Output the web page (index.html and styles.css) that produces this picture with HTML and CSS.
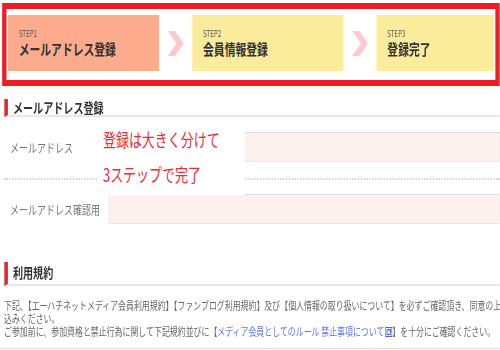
FILE: index.html
```html
<!DOCTYPE html>
<html lang="ja">
<head>
  <meta charset="UTF-8" />
  <title>会員登録 – メールアドレス登録</title>
  <link rel="stylesheet" href="styles.css">
</head>
<body>

<div class="page">

  <div class="steps">
    <div class="step step-current">
      <span class="step-no">STEP1</span>
      <span class="step-name">メールアドレス登録</span>
    </div>
    <svg class="step-arrow" width="22" height="25" viewBox="0 0 22 25"><polygon points="0,0 10,0 22,12.5 10,25 0,25 12,12.5" fill="#ffc8cc"/></svg>
    <div class="step">
      <span class="step-no">STEP2</span>
      <span class="step-name">会員情報登録</span>
    </div>
    <svg class="step-arrow" width="22" height="25" viewBox="0 0 22 25"><polygon points="0,0 10,0 22,12.5 10,25 0,25 12,12.5" fill="#ffc8cc"/></svg>
    <div class="step">
      <span class="step-no">STEP3</span>
      <span class="step-name">登録完了</span>
    </div>
  </div>

  <h2 class="sec-title sec-mail">メールアドレス登録</h2>

  <form class="mail-form">
    <div class="form-row">
      <label for="mail">メールアドレス</label>
      <input type="email" id="mail" name="mail">
    </div>
    <div class="form-row form-row-last">
      <label for="mail2">メールアドレス確認用</label>
      <input type="email" id="mail2" name="mail2">
    </div>
  </form>

  <div class="note">登録は大きく分けて<br>3ステップで完了</div>

  <h2 class="sec-title sec-terms">利用規約</h2>

  <div class="terms">
    <p>下記、【エーハチネットメディア会員利用規約】【ファンブログ利用規約】及び【個人情報の取り扱いについて】を必ずご確認頂き、同意の上お申し<br>込みください。</p>
    <p>ご参加前に、参加資格と禁止行為に関して下記規約並びに【<a href="#">メディア会員としてのルール 禁止事項について<svg class="ext" width="10" height="10" viewBox="0 0 10 10"><rect x="0.5" y="0.5" width="9" height="9" fill="#e8ecff" stroke="#4a63e6"/><rect x="2.5" y="3" width="5" height="4.5" fill="none" stroke="#4a63e6"/><path d="M4 2.5 L8 2.5 L8 6" fill="none" stroke="#4a63e6"/></svg></a>】を十分にご確認ください。</p>
  </div>

</div>

</body>
</html>
```

FILE: styles.css
```css
body { margin: 0; overflow: hidden; background: #fff; color: #333; font-family: "Noto Sans CJK JP", "Noto Sans", sans-serif; }

/* the whole page is drawn narrow */
.page { position: relative; width: 694px; transform: scaleX(.72); transform-origin: 0 0; }

.steps { display: grid; grid-template-columns: 210px 46px 210px 46px 1fr; align-items: center; margin: 3px 0 0 3px; border: 6px solid #ee1d25; padding: 6px 2px 9px 2px; }
.step { height: 56px; box-sizing: border-box; padding: 1px 0 0 15px; background: #fbec9b; display: flex; flex-direction: column; justify-content: center; gap: 2px; }
.step-current { background: #fcab8c; }
.step-no { font-size: 8.5px; line-height: 9px; color: #555; }
.step-name { font-size: 15px; line-height: 18px; font-weight: bold; color: #333; }
.step-arrow { justify-self: center; }

.sec-title { margin: 0 0 0 5.5px; padding-left: 7.5px; border-left: 5px solid #e02a33; border-bottom: 2px solid #e8e8e8; font-size: 14px; font-weight: bold; color: #333; }
.sec-mail { margin-top: 13px; line-height: 16px; }
.sec-terms { margin-top: 38px; line-height: 20px; padding-bottom: 2px; }

.mail-form { margin: 0 0 0 5.5px; }
.form-row { display: flex; align-items: center; padding: 15px 0 16px; border-bottom: 2px dotted #d4d4d4; }
.form-row-last { padding: 14px 0 0; border-bottom: none; }
.form-row label { width: 145.5px; box-sizing: border-box; padding-left: 8.5px; font-size: 12.5px; color: #777; }
.form-row input { flex: 1; height: 30px; box-sizing: border-box; margin: 0; border: 1px solid #ebe6e5; border-top-color: #dcdcdc; background: #fdf1ef; }

.note { position: absolute; left: 135px; top: 114px; width: 205px; height: 78px; box-sizing: border-box; padding: 5px 0 0 8px; background: #fff; color: #ee2a32; font-size: 18px; line-height: 35px; }

.terms { padding: 0 0 10px 5.5px; border-bottom: 1px solid #dddddd; font-size: 11px; line-height: 13px; color: #666; white-space: nowrap; }
.terms p { margin: 0; }
.terms p:first-child { margin-top: 13px; }
.terms a { color: #5f73ee; text-decoration: none; }
.terms .ext { vertical-align: -1px; margin-left: 1px; }
```
